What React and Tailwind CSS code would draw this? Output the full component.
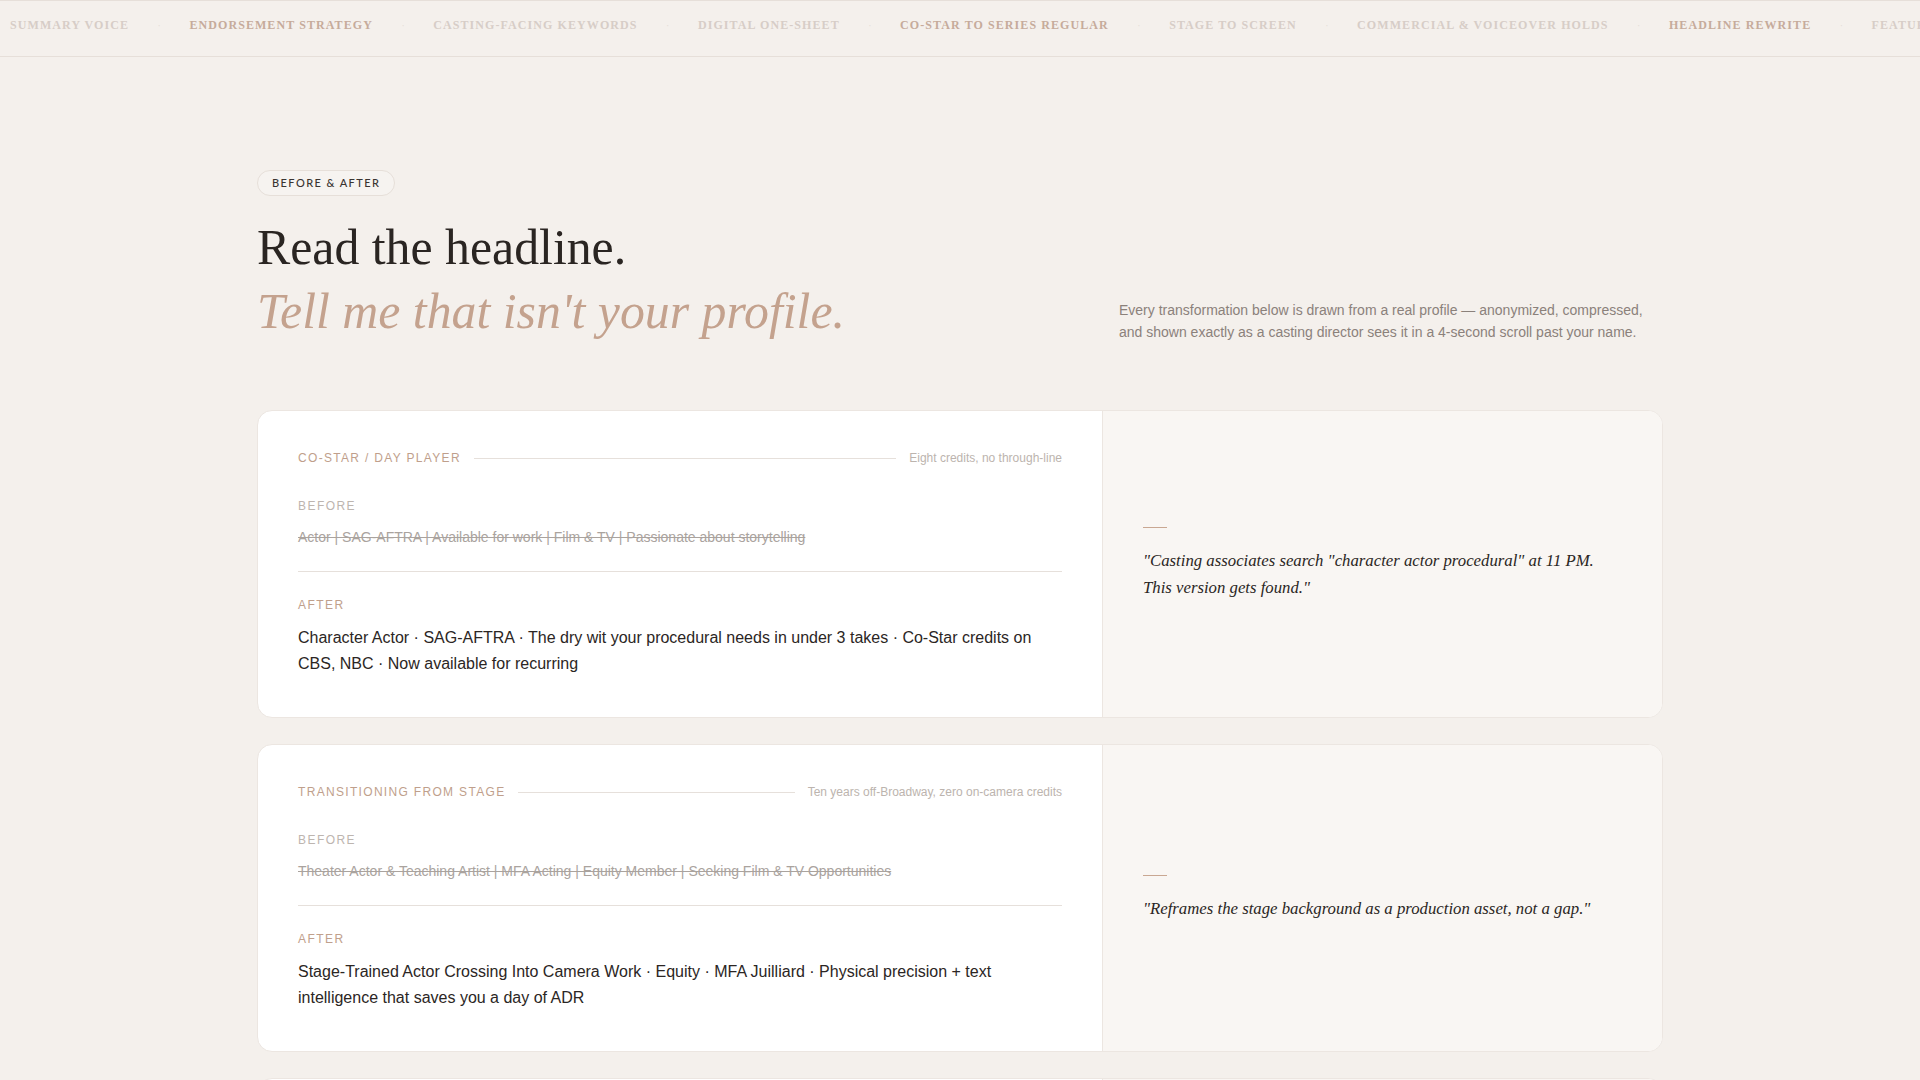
import React from "react";

const navItems = [
  { t: "SUMMARY VOICE", a: false },
  { t: "ENDORSEMENT STRATEGY", a: true },
  { t: "CASTING-FACING KEYWORDS", a: false },
  { t: "DIGITAL ONE-SHEET", a: false },
  { t: "CO-STAR TO SERIES REGULAR", a: true },
  { t: "STAGE TO SCREEN", a: false },
  { t: "COMMERCIAL & VOICEOVER HOLDS", a: false },
  { t: "HEADLINE REWRITE", a: true },
  { t: "FEATURED IN", a: false },
];

const cards = [
  {
    label: "CO-STAR / DAY PLAYER",
    note: "Eight credits, no through-line",
    before:
      "Actor | SAG-AFTRA | Available for work | Film & TV | Passionate about storytelling",
    after:
      "Character Actor · SAG-AFTRA · The dry wit your procedural needs in under 3 takes · Co-Star credits on CBS, NBC · Now available for recurring",
    quote:
      '"Casting associates search "character actor procedural" at 11 PM. This version gets found."',
  },
  {
    label: "TRANSITIONING FROM STAGE",
    note: "Ten years off-Broadway, zero on-camera credits",
    before:
      "Theater Actor & Teaching Artist | MFA Acting | Equity Member | Seeking Film & TV Opportunities",
    after:
      "Stage-Trained Actor Crossing Into Camera Work · Equity · MFA Juilliard · Physical precision + text intelligence that saves you a day of ADR",
    quote: '"Reframes the stage background as a production asset, not a gap."',
  },
  {
    label: "COMMERCIAL TALENT",
    note: "Strong reel, generic headline",
    before: "Actor | Model | Commercial | Print | Hardworking and reliable",
    after:
      "Commercial Actor · Relatable everyday parent · Natural on-camera read · Local & regional spots",
    quote: '"Gives the booker the type before the headshot loads."',
  },
];

const sans = { fontFamily: '"Liberation Sans", Arial, sans-serif' };
const serif = { fontFamily: '"Liberation Serif", "Times New Roman", serif' };

function Card({ c }) {
  return (
    <div className="grid grid-cols-[844px_1fr] rounded-[15px] border border-[#ece6e1] bg-white overflow-hidden">
      <div className="px-10 pt-[38px] pb-[40px]">
        <div className="flex items-center gap-[13px]">
          <span className="text-[12px] tracking-[0.11em] text-[#bf9f8c] whitespace-nowrap" style={sans}>
            {c.label}
          </span>
          <span className="flex-1 h-px bg-[#e6e0db]" />
          <span className="text-[12px] text-[#bcb4ae] whitespace-nowrap" style={sans}>
            {c.note}
          </span>
        </div>
        <div className="mt-[30px] text-[12px] tracking-[0.12em] text-[#bdb5af]" style={sans}>
          BEFORE
        </div>
        <div className="mt-[12px] text-[14px] text-[#aaa39e] line-through decoration-[#aaa39e]" style={sans}>
          {c.before}
        </div>
        <div className="mt-[23px] h-px bg-[#e6e0db]" />
        <div className="mt-[24px] text-[12px] tracking-[0.12em] text-[#c0a08c]" style={sans}>
          AFTER
        </div>
        <div className="mt-[11px] text-[16px] leading-[26px] text-[#2b2624]" style={sans}>
          {c.after}
        </div>
      </div>
      <div className="bg-[#f9f6f3] border-l border-[#ece6e1] px-10 flex flex-col justify-center">
        <div className="w-6 h-px bg-[#c9a792]" />
        <p className="mt-[19px] text-[16.75px] leading-[27px] italic text-[#2b2624]" style={serif}>
          {c.quote}
        </p>
      </div>
    </div>
  );
}

export default function App() {
  return (
    <div className="min-h-screen bg-[#f4f0ec] overflow-hidden">
      <nav className="h-[57px] border-t border-b border-[#e6dfd9] flex items-start pt-[15px] pl-[10px] overflow-hidden whitespace-nowrap">
        <div className="flex items-center gap-[28.5px]" style={serif}>
          {navItems.map((n, i) => (
            <React.Fragment key={n.t}>
              {i > 0 && <span className="text-[10px] text-[#e4ddd7]">·</span>}
              <span
                className={
                  "text-[12px] font-bold tracking-[0.09em] " +
                  (n.a ? "text-[#c6ab9b]" : "text-[#d7cdc7]")
                }
              >
                {n.t}
              </span>
            </React.Fragment>
          ))}
        </div>
      </nav>

      <main className="w-[1406px] mx-auto pt-[112px]">
        <div className="inline-flex items-center h-[26px] px-[14px] rounded-full border border-[#e6dfd9] bg-[#f6f3f0]">
          <span className="text-[11px] tracking-[0.13em] text-[#3a3431] font-medium" style={{ fontFamily: 'Lato, "Open Sans", sans-serif' }}>
            BEFORE &amp; AFTER
          </span>
        </div>

        <div className="flex items-end justify-between mt-[20px]">
          <h1 className="text-[49.8px] leading-[64px] text-[#2a2522]" style={serif}>
            Read the headline.
            <br />
            <em className="text-[#c4a28e]">Tell me that isn't your profile.</em>
          </h1>
          <p className="w-[544px] mb-px text-[14px] leading-[22px] text-[#8b817b]" style={sans}>
            Every transformation below is drawn from a real profile — anonymized, compressed,
            and shown exactly as a casting director sees it in a 4-second scroll past your name.
          </p>
        </div>

        <div className="mt-[66px] flex flex-col gap-[26px]">
          {cards.map((c) => (
            <Card key={c.label} c={c} />
          ))}
        </div>
      </main>
    </div>
  );
}
